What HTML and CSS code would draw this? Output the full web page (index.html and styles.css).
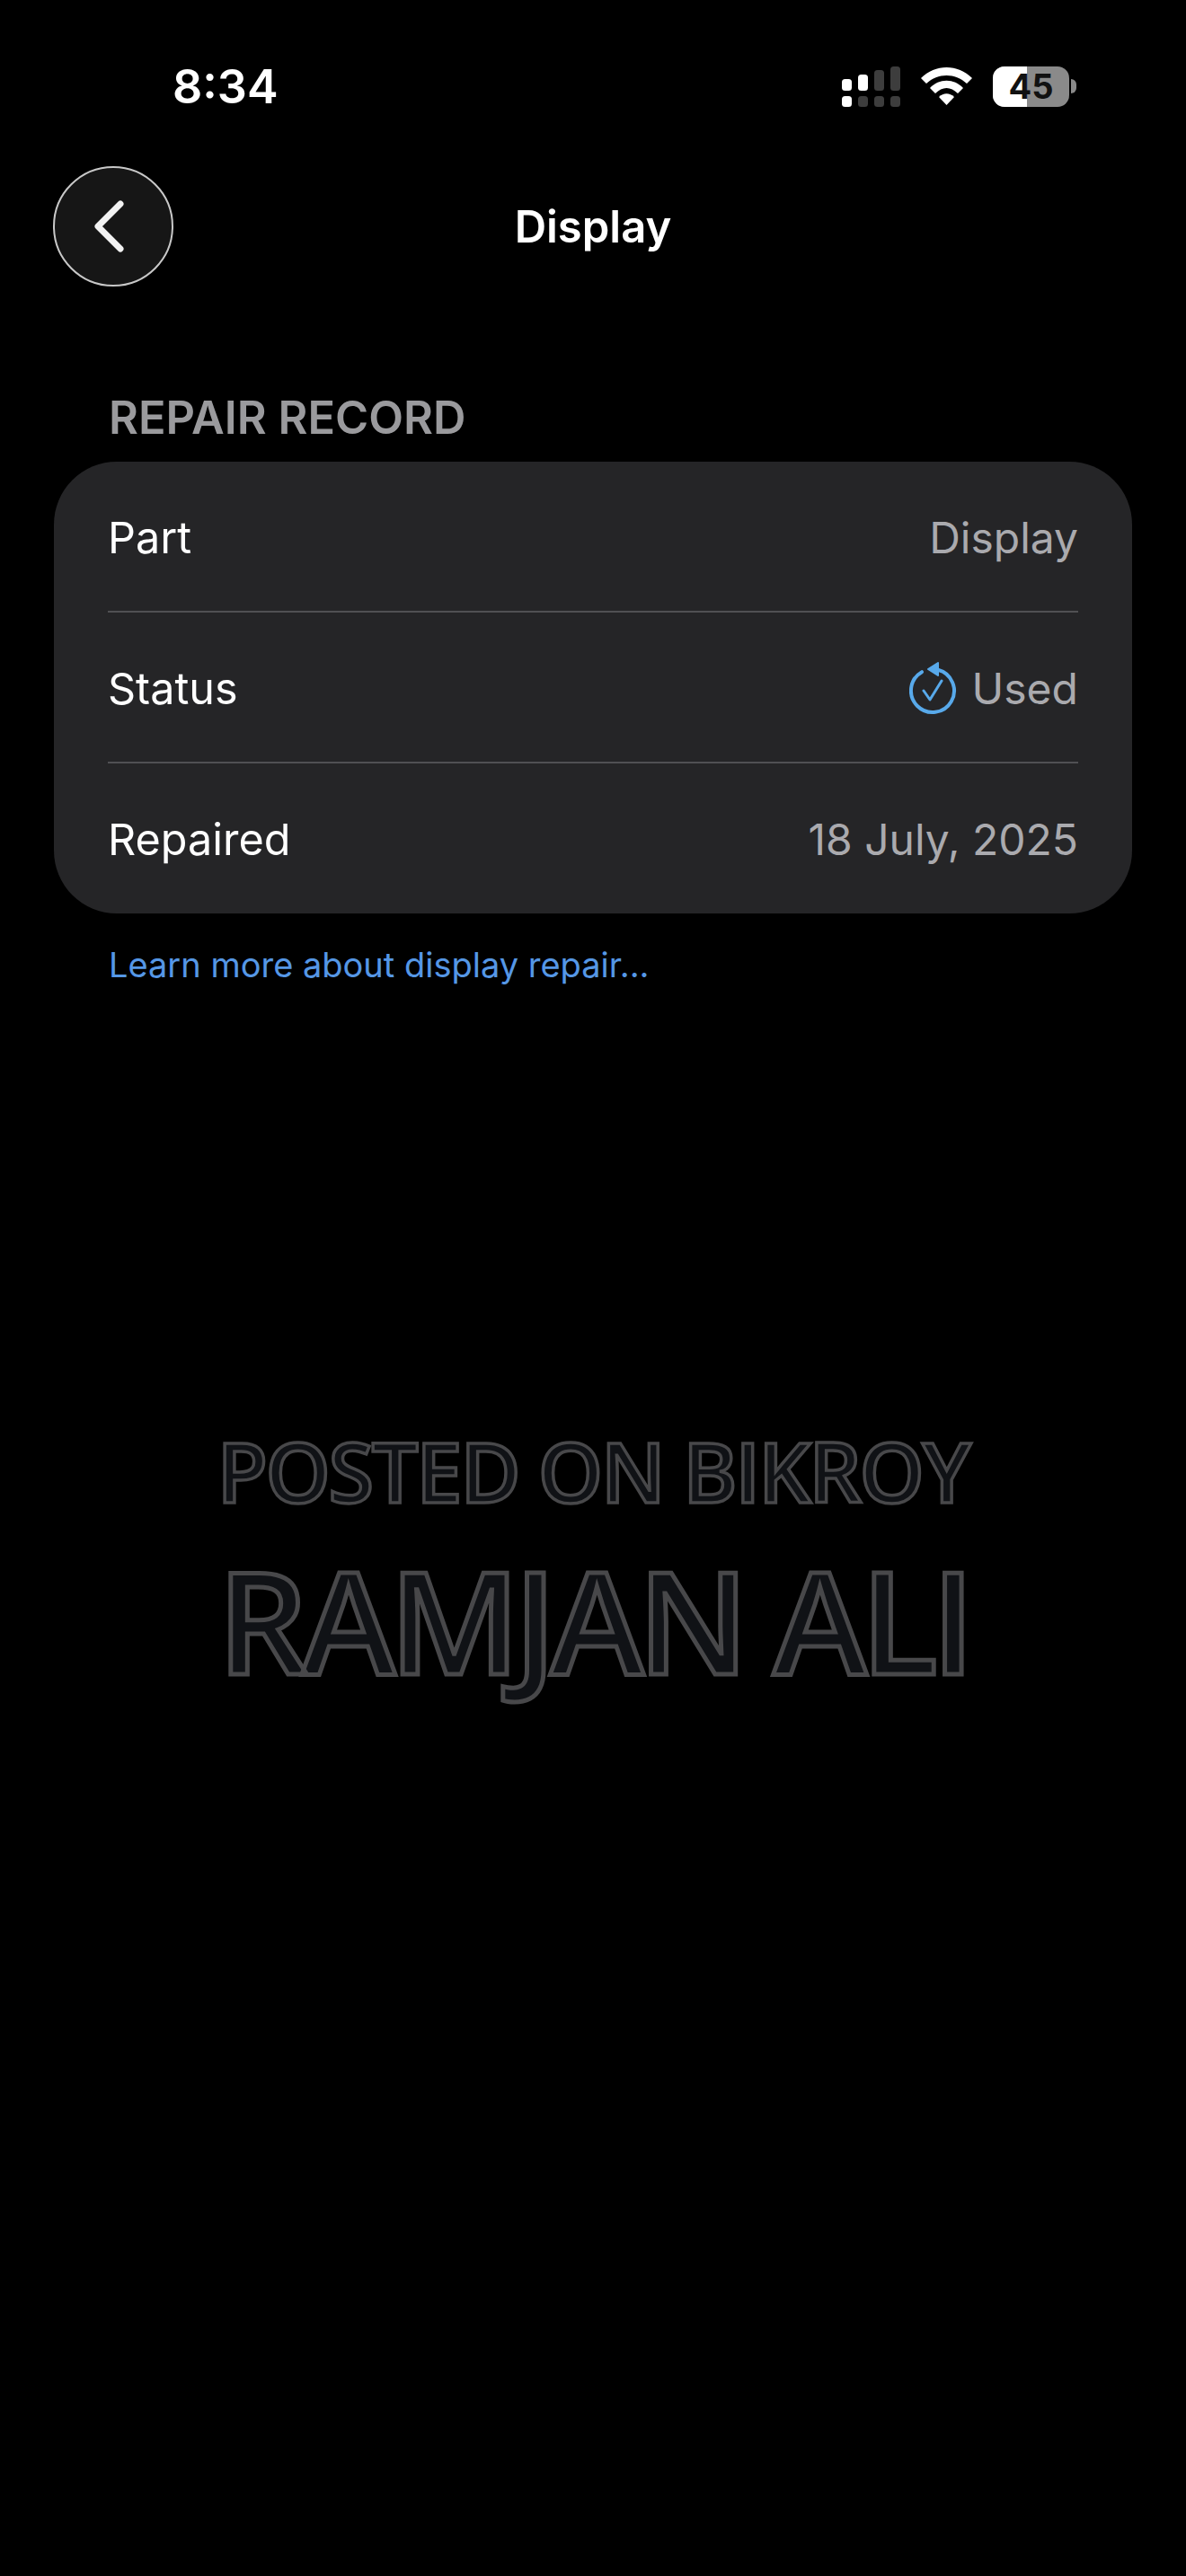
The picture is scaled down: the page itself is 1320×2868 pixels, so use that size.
FILE: index.html
```html
<!DOCTYPE html>
<html lang="en">
<head>
    <meta charset="UTF-8">
    <meta name="viewport" content="width=device-width, initial-scale=1.0">
    <title>Display</title>
    <link rel="stylesheet" href="styles.css">
</head>
<body>
    <header class="status-bar">
        <span class="clock">8:34</span>
        <div class="status-icons">
            <svg class="signal" width="65" height="46" viewBox="0 0 65 46">
                <rect x="0" y="15" width="11" height="13" rx="3.5" fill="#fff"/>
                <rect x="18" y="10" width="11" height="18" rx="3.5" fill="#fff"/>
                <rect x="36" y="5" width="11" height="23" rx="3.5" fill="#3d3d3d"/>
                <rect x="54" y="1" width="11" height="27" rx="3.5" fill="#3d3d3d"/>
                <rect x="0" y="34" width="11" height="12" rx="3.5" fill="#fff"/>
                <rect x="18" y="34" width="11" height="12" rx="3.5" fill="#3d3d3d"/>
                <rect x="36" y="34" width="11" height="12" rx="3.5" fill="#3d3d3d"/>
                <rect x="54" y="34" width="11" height="12" rx="3.5" fill="#3d3d3d"/>
            </svg>
            <svg class="wifi" width="57" height="42" viewBox="0 0 57 42">
                <path d="M0 12 C16 -4 41 -4 57 12 L51 18 C38 6 19 6 6 18 Z" fill="#fff"/>
                <path d="M10 23 C20 12 37 12 47 23 L41 29 C33 21 24 21 16 29 Z" fill="#fff"/>
                <path d="M20 33 C25 28 32 28 37 33 L28.5 42 Z" fill="#fff"/>
            </svg>
            <div class="battery">
                <div class="battery-body">
                    <div class="battery-fill"></div>
                    <span class="battery-text">45</span>
                </div>
                <div class="battery-cap"></div>
            </div>
        </div>
    </header>

    <nav class="nav-bar">
        <a class="back-btn" href="#">
            <svg width="33" height="58" viewBox="0 0 33 58">
                <path d="M29 4 L4 29 L29 54" fill="none" stroke="#f2f2f2" stroke-width="7" stroke-linecap="round" stroke-linejoin="round"/>
            </svg>
        </a>
        <h1 class="nav-title">Display</h1>
    </nav>

    <main class="content">
        <h2 class="section-title">REPAIR RECORD</h2>
        <div class="card">
            <div class="row">
                <span class="row-label">Part</span>
                <span class="row-value">Display</span>
            </div>
            <div class="row">
                <span class="row-label">Status</span>
                <span class="row-value">
                    <svg class="status-icon" width="54" height="60" viewBox="0 0 54 60">
                        <path d="M32 9.8 A24 24 0 1 1 14 12.2" fill="none" stroke="#58a9ea" stroke-width="4" stroke-linecap="round"/>
                        <path d="M32 2 L21 9 L32 16 Z" fill="#58a9ea" stroke="#58a9ea" stroke-width="2" stroke-linejoin="round"/>
                        <path d="M16 33 L23 43 L36 22" fill="none" stroke="#58a9ea" stroke-width="3" stroke-linecap="round" stroke-linejoin="round"/>
                    </svg>
                    Used
                </span>
            </div>
            <div class="row">
                <span class="row-label">Repaired</span>
                <span class="row-value">18 July, 2025</span>
            </div>
        </div>
        <a class="learn-link" href="#">Learn more about display repair...</a>
    </main>

    <section class="watermark">
        <div class="wm-top">POSTED ON BIKROY</div>
        <div class="wm-name">RAMJAN ALI</div>
    </section>
</body>
</html>
```
FILE: styles.css
```css
* {
    margin: 0;
    padding: 0;
    box-sizing: border-box;
}

body {
    width: 1320px;
    height: 2868px;
    overflow: hidden;
    background-color: #000;
    color: #fff;
    font-family: Inter, "Liberation Sans", sans-serif;
}

a {
    text-decoration: none;
}

.status-bar {
    height: 185px;
    padding: 70px 122px 0 192px;
    display: flex;
    justify-content: space-between;
    align-items: flex-start;
}

.clock {
    font-size: 52px;
    line-height: 54px;
    font-weight: 600;
}

.status-icons {
    display: flex;
    align-items: center;
    gap: 23px;
    height: 46px;
    margin-top: 3px;
}

.battery {
    display: flex;
    align-items: center;
    gap: 2px;
}

.battery-body {
    position: relative;
    width: 85px;
    height: 45px;
    border-radius: 13px;
    overflow: hidden;
    background-color: #8a8a8a;
}

.battery-fill {
    width: 38px;
    height: 100%;
    background-color: #fff;
}

.battery-text {
    position: absolute;
    top: 0;
    left: 0;
    width: 100%;
    text-align: center;
    font-size: 38px;
    line-height: 45px;
    font-weight: 700;
    color: #111;
}

.battery-cap {
    width: 6px;
    height: 16px;
    border-radius: 0 6px 6px 0;
    background-color: #8a8a8a;
}

.nav-bar {
    position: relative;
    height: 134px;
    padding-left: 59px;
    display: flex;
    align-items: center;
}

.back-btn {
    width: 134px;
    height: 134px;
    border: 2px solid #c8c8c8;
    border-radius: 50%;
    background-color: #161616;
    display: flex;
    align-items: center;
    justify-content: center;
    padding-right: 10px;
}

.nav-title {
    position: absolute;
    left: 0;
    right: 0;
    text-align: center;
    font-size: 49px;
    font-weight: 600;
}

.content {
    padding: 119px 60px 0;
}

.section-title {
    padding-left: 61px;
    font-size: 50.5px;
    line-height: 54px;
    font-weight: 600;
    color: #9a9a9d;
}

.card {
    margin-top: 22px;
    height: 503px;
    padding: 0 60px;
    border-radius: 70px;
    background-color: #252527;
}

.row {
    height: 168px;
    padding-top: 2px;
    border-bottom: 2px solid #505053;
    display: flex;
    justify-content: space-between;
    align-items: center;
}

.row:last-child {
    height: 167px;
    border-bottom: none;
}

.row-label {
    font-size: 48.5px;
    color: #fff;
}

.row-value {
    font-size: 48px;
    color: #aaaaae;
    display: flex;
    align-items: center;
    gap: 16px;
}

.learn-link {
    display: block;
    margin-top: 34px;
    padding-left: 61px;
    font-size: 38px;
    line-height: 46px;
    color: #5597e6;
}

.watermark {
    margin-top: 491px;
    text-align: center;
    font-family: "Open Sans", "Noto Sans", sans-serif;
    font-weight: 600;
    color: #101216;
    -webkit-text-stroke: 3.5px #48484a;
}

.wm-top {
    font-size: 92px;
    line-height: 100px;
    letter-spacing: -2.4px;
}

.wm-name {
    margin-top: 20px;
    font-size: 158px;
    line-height: 190px;
    letter-spacing: -7px;
    -webkit-text-stroke-width: 5px;
}
```
